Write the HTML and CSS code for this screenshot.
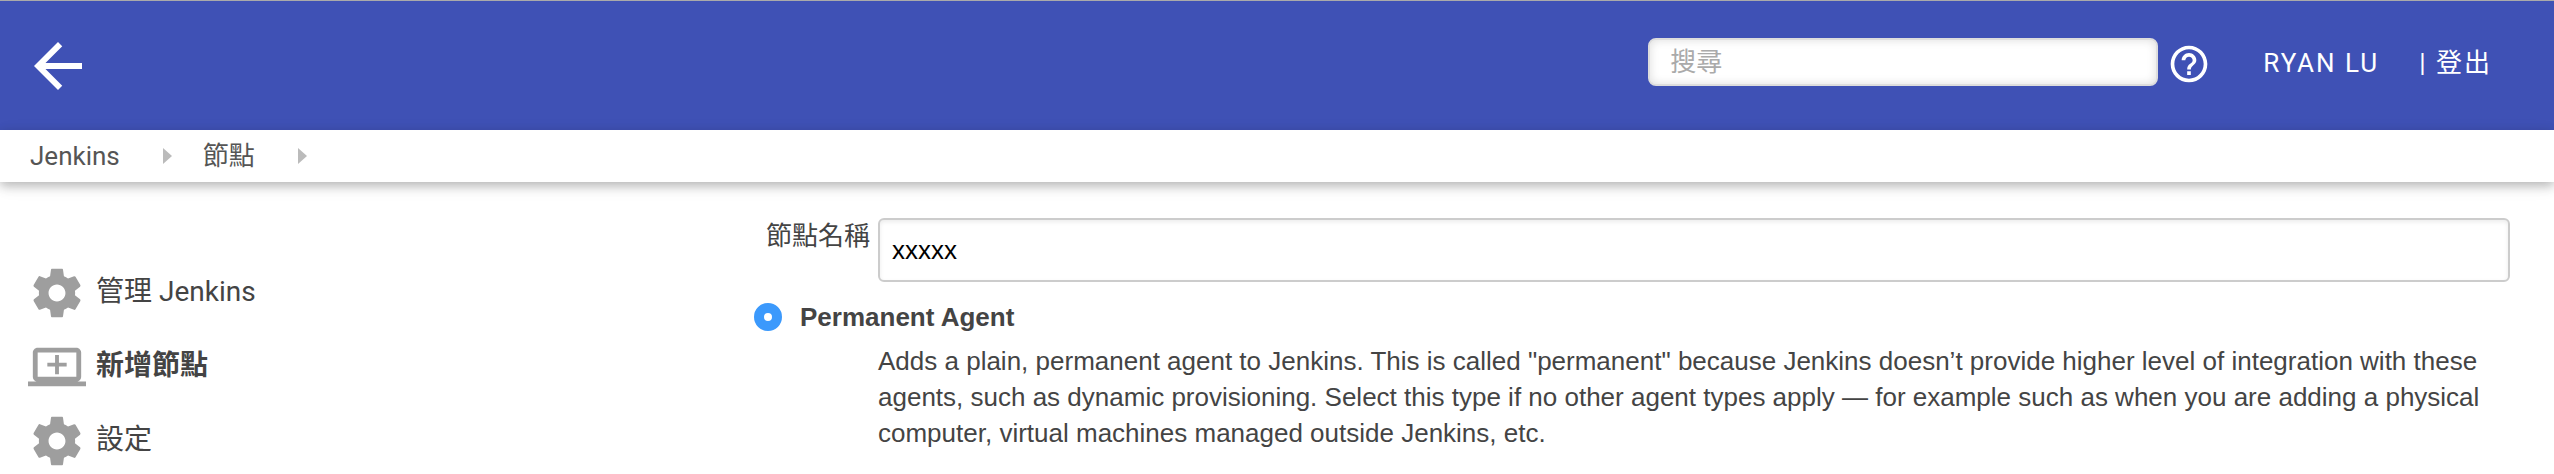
FILE: index.html
```html
<!DOCTYPE html>
<html lang="zh-Hant">
<head>
<meta charset="utf-8">
<title>新增節點 [Jenkins]</title>
<link rel="stylesheet" href="styles.css">
</head>
<body>
<svg class="sprite" aria-hidden="true">
  <symbol id="gear" viewBox="0 0 24 24"><path d="M19.43 12.98c.04-.32.07-.64.07-.98s-.03-.66-.07-.98l2.11-1.65c.19-.15.24-.42.12-.64l-2-3.46c-.12-.22-.39-.3-.61-.22l-2.49 1c-.52-.4-1.08-.73-1.69-.98l-.38-2.65C14.46 2.18 14.25 2 14 2h-4c-.25 0-.46.18-.49.42l-.38 2.65c-.61.25-1.17.59-1.69.98l-2.49-1c-.23-.09-.49 0-.61.22l-2 3.46c-.13.22-.07.49.12.64l2.11 1.65c-.04.32-.07.65-.07.98s.03.66.07.98l-2.11 1.65c-.19.15-.24.42-.12.64l2 3.46c.12.22.39.3.61.22l2.49-1c.52.4 1.08.73 1.69.98l.38 2.65c.03.24.24.42.49.42h4c.25 0 .46-.18.49-.42l.38-2.65c.61-.25 1.17-.59 1.69-.98l2.49 1c.23.09.49 0 .61-.22l2-3.46c.12-.22.07-.49-.12-.64l-2.11-1.65zM12 15.500c-1.930 0-3.500-1.570-3.500-3.500s1.570-3.500 3.500-3.500 3.500 1.570 3.500 3.500-1.570 3.500-3.500 3.500z"/></symbol>
</svg>
<header class="topbar">
  <a class="back" href="#" aria-label="Jenkins">
    <svg class="back-icon" viewBox="0 0 24 24"><path d="M20 11H7.830l5.590-5.590L12 4l-8 8 8 8 1.410-1.410L7.830 13H20v-2z"/></svg>
  </a>
  <div class="tools">
    <input class="search" type="search" placeholder="搜尋" aria-label="搜尋">
    <a class="help" href="#" aria-label="Help">
      <svg class="help-icon" viewBox="0 0 24 24"><path d="M11 18h2v-2h-2v2zm1-16C6.480 2 2 6.480 2 12s4.480 10 10 10 10-4.480 10-10S17.520 2 12 2zm0 18c-4.410 0-8-3.590-8-8s3.590-8 8-8 8 3.590 8 8-3.590 8-8 8zm0-14c-2.210 0-4 1.790-4 4h2c0-1.100.9-2 2-2s2 .9 2 2c0 2-3 1.750-3 5h2c0-2.250 3-2.500 3-5 0-2.210-1.790-4-4-4z"/></svg>
    </a>
    <a class="user" href="#">RYAN LU</a>
    <div class="logout">| <a href="#">登出</a></div>
  </div>
</header>
<nav class="crumbs">
  <a href="#">Jenkins</a>
  <svg class="chevron" viewBox="0 0 9 16"><path d="M0 0l9 8-9 8z"/></svg>
  <a href="#">節點</a>
  <svg class="chevron" viewBox="0 0 9 16"><path d="M0 0l9 8-9 8z"/></svg>
</nav>
<div class="page">
  <nav class="tasks">
    <a class="task" href="#"><svg class="task-icon"><use href="#gear"/></svg><span>管理 Jenkins</span></a>
    <a class="task current" href="#"><svg class="task-icon" viewBox="0 0 24 24"><path fill-rule="evenodd" d="M20 18c1.100 0 2-.9 2-2V6c0-1.100-.9-2-2-2H4c-1.100 0-2 .9-2 2v10c0 1.100.9 2 2 2H0v2h24v-2h-4zM4 6h16v10H4V6zM11.200 7h1.600v3.200H16v1.600h-3.200V15h-1.600v-3.200H8v-1.600h3.200z"/></svg><span>新增節點</span></a>
    <a class="task" href="#"><svg class="task-icon"><use href="#gear"/></svg><span>設定</span></a>
  </nav>
  <main class="content">
    <form class="form">
      <label class="name-label" for="name">節點名稱</label>
      <input class="name" id="name" type="text" value="xxxxx">
      <div class="option">
        <input class="radio" id="permanent" type="radio" name="mode" checked>
        <label for="permanent">Permanent Agent</label>
      </div>
      <p class="description">Adds a plain, permanent agent to Jenkins. This is called "permanent" because Jenkins doesn’t provide higher level of integration with these agents, such as dynamic provisioning. Select this type if no other agent types apply — for example such as when you are adding a physical computer, virtual machines managed outside Jenkins, etc.</p>
    </form>
  </main>
</div>
</body>
</html>
```
FILE: styles.css
```css
* { box-sizing: border-box; }
body {
  margin: 0;
  background: #fff;
  color: #444;
  font: 26px/36px Roboto, "Noto Sans CJK TC", sans-serif;
}
a { color: inherit; text-decoration: none; }
svg { display: block; flex: none; }
.sprite { display: none; }

.topbar {
  display: flex;
  justify-content: space-between;
  align-items: flex-start;
  height: 130px;
  padding: 29px 62px 0 22px;
  border-top: 1px solid #aaa;
  background: #3f51b5;
  color: #fff;
}
.back-icon { width: 72px; height: 72px; fill: #fff; }
.tools { display: flex; align-items: center; padding-top: 8px; }
.search {
  width: 510px;
  height: 48px;
  padding: 0 20px;
  border: 2px solid #ddd;
  border-radius: 8px;
  background: #fff;
  box-shadow: inset 0 0 10px #ddd;
  font: inherit;
  appearance: none;
}
.search::placeholder { color: #aaa; opacity: 1; }
.help { margin-left: 9px; padding-top: 4px; }
.help-icon { width: 44px; height: 44px; fill: #fff; }
.user, .logout { padding-top: 2px; letter-spacing: 2px; }
.user { margin-left: 52px; }
.logout { margin-left: 40px; }

.crumbs {
  position: relative;
  display: flex;
  align-items: center;
  height: 52px;
  padding-left: 30px;
  gap: 31px;
  color: #555;
  background: #fff;
  box-shadow: 0 4px 10px rgba(0, 0, 0, .25), 0 4px 20px rgba(0, 0, 0, .06);
}
.chevron { width: 9px; height: 16px; margin-left: 12px; fill: #bbb; }

.page { display: flex; }
.tasks { flex: 0 0 754px; padding: 74px 0 0 28px; }
.task {
  display: flex;
  align-items: center;
  gap: 10px;
  height: 74px;
  font-size: 28px;
}
.task span { padding-bottom: 3px; }
.current { font-weight: 700; }
.task-icon { width: 58px; height: 58px; fill: #9e9e9e; }

.content { flex: 1; padding: 36px 44px 20px 0; }
.form {
  display: grid;
  grid-template-columns: 116px 1fr;
  column-gap: 8px;
  font-family: "Liberation Sans", "Noto Sans CJK TC", sans-serif;
}
.name-label { justify-self: end; white-space: nowrap; }
.name {
  width: 100%;
  height: 64px;
  padding: 0 12px;
  border: 2px solid #ccc;
  border-radius: 6px;
  background: #fff;
  box-shadow: inset 0 2px 4px rgba(0, 0, 0, .08);
  color: #000;
  font: inherit;
}
.option {
  grid-column: 1 / -1;
  display: flex;
  align-items: center;
  gap: 18px;
  margin-top: 17px;
  font-weight: 700;
}
.radio {
  width: 28px;
  height: 28px;
  margin: 0;
  border: 10px solid #3b99fc;
  border-radius: 50%;
  background: #fff;
  appearance: none;
}
.description { grid-column: 2; margin: 8px 0 0; }
```
